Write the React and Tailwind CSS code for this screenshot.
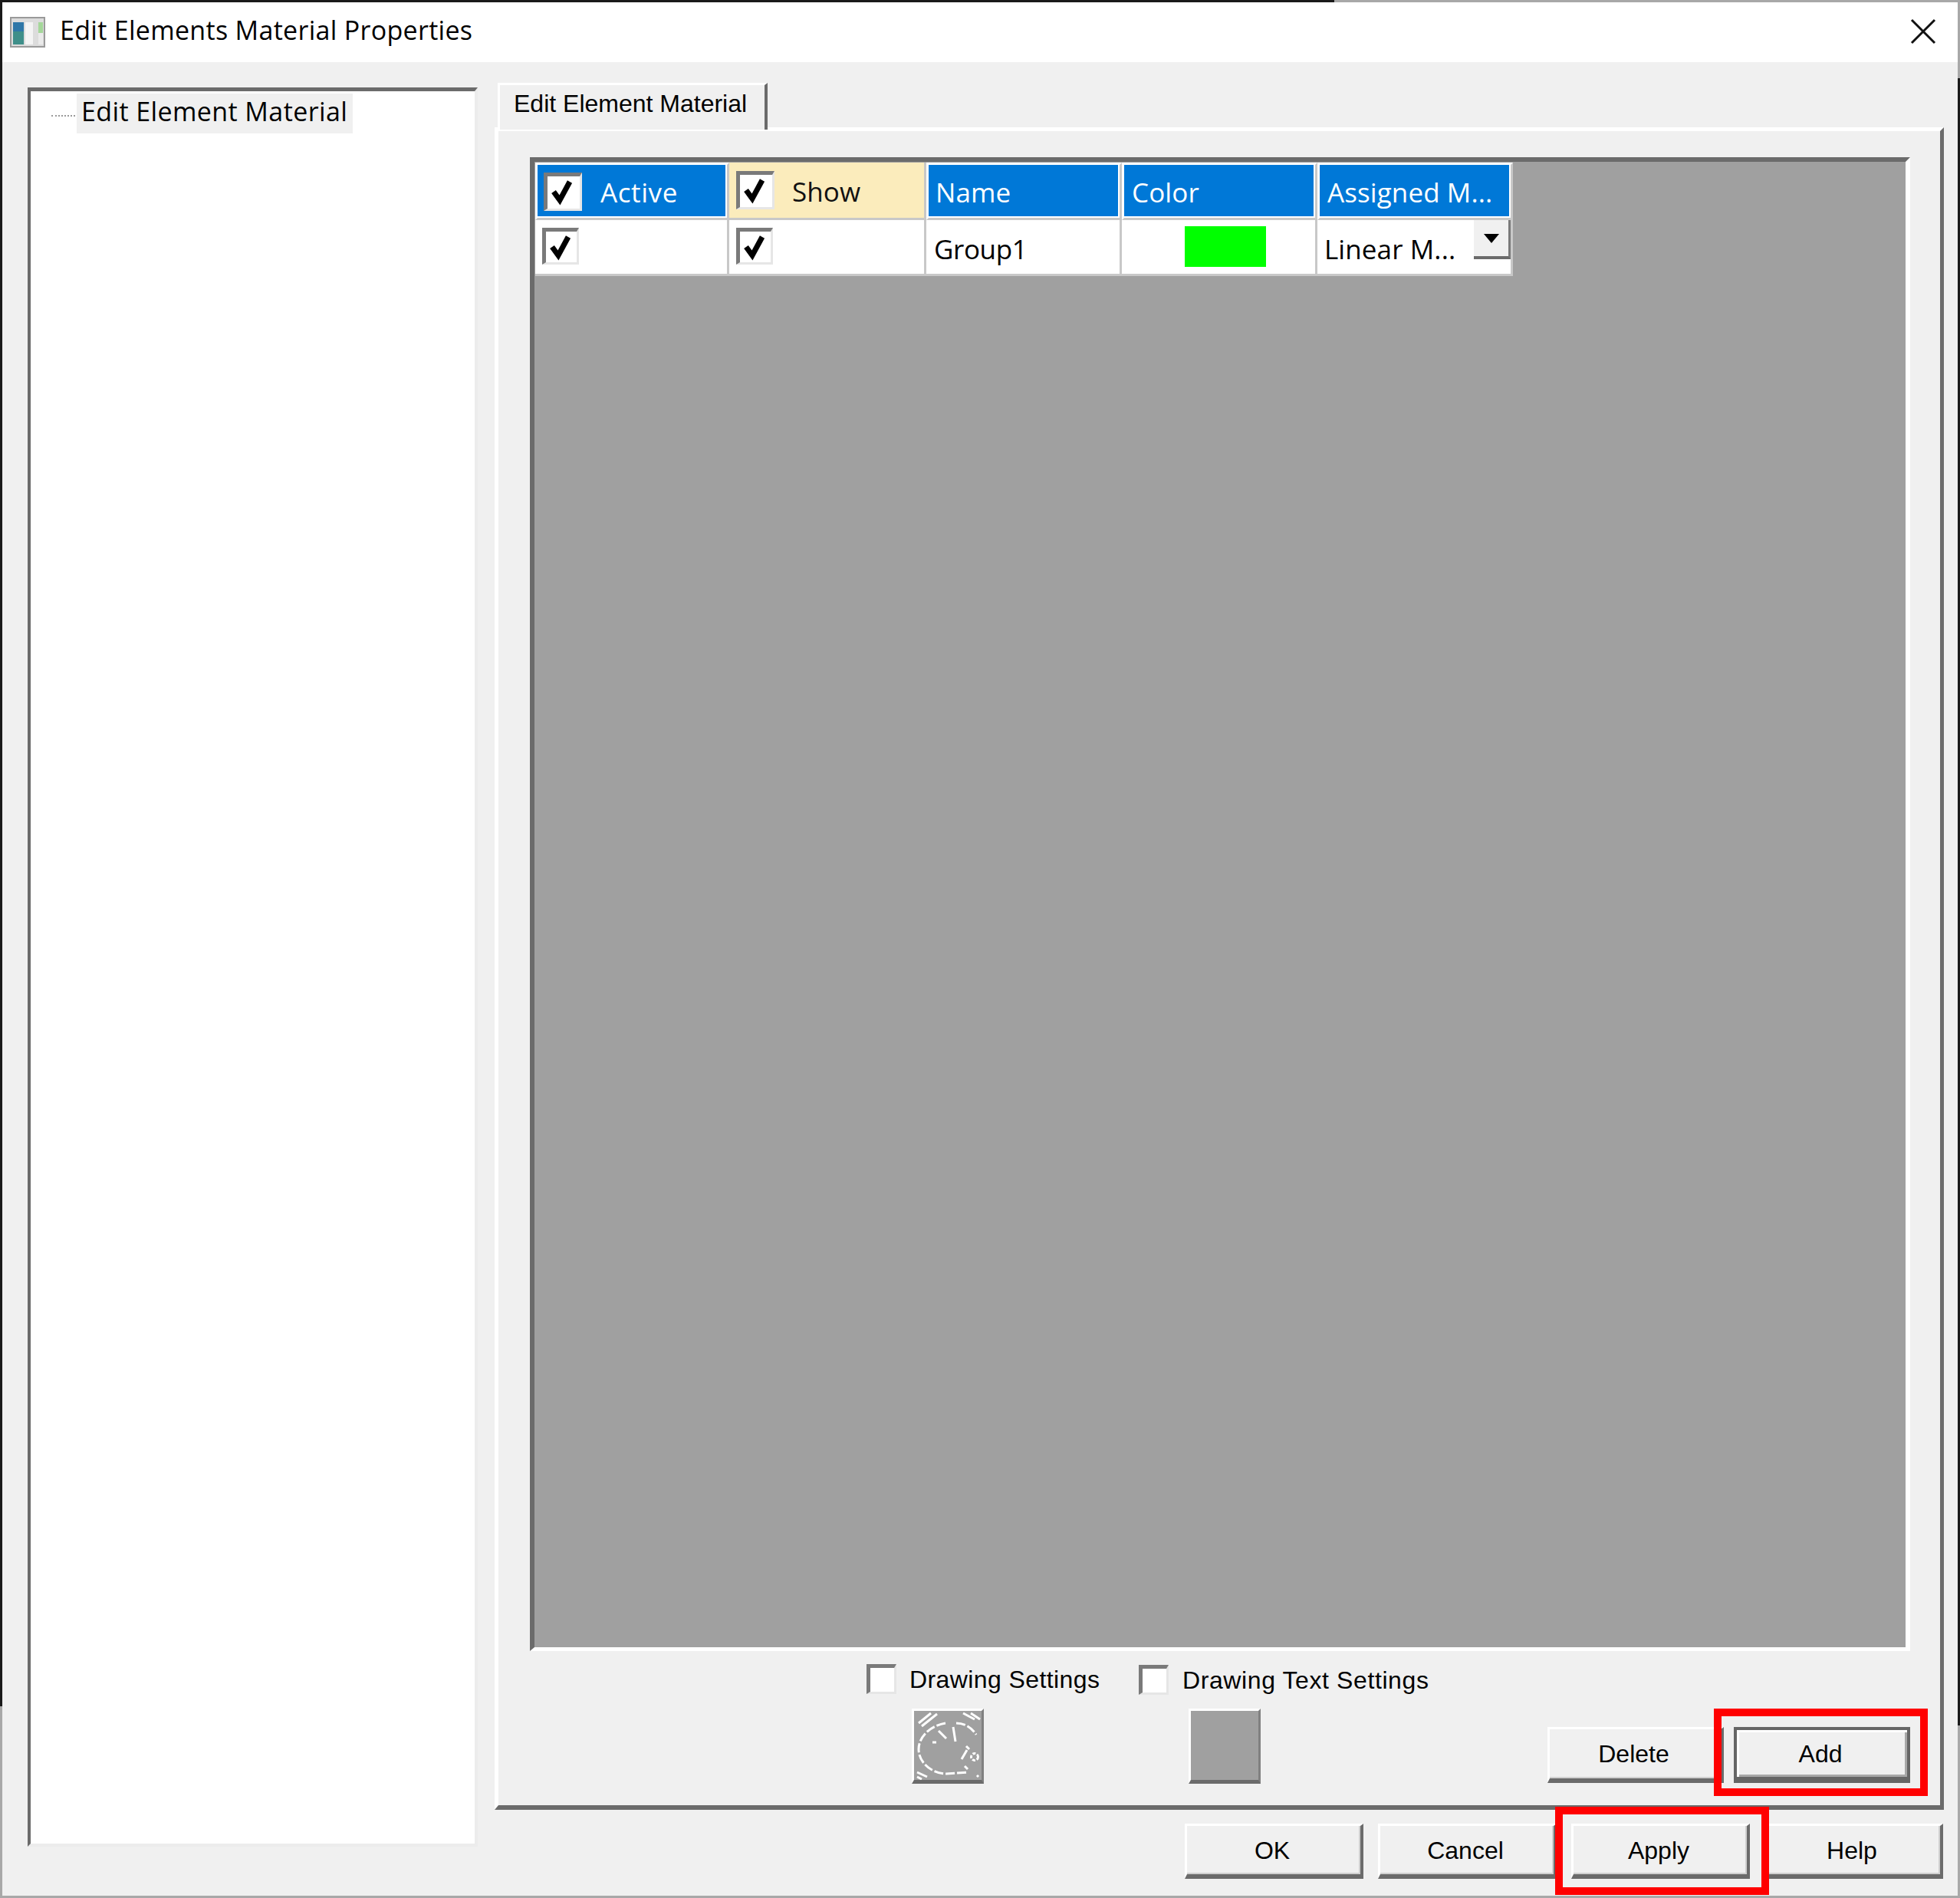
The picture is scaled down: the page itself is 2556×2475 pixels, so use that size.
const segoe = "font-['Open_Sans','Noto_Sans',sans-serif]";
const arial = "font-['Liberation_Sans',Arial,sans-serif]";

function Check() {
    return (
        <svg className="absolute left-0 top-0" width="44" height="44" viewBox="0 0 44 44">
            <path d="M8 20 L16 31 L29 7" fill="none" stroke="#000" strokeWidth="7" />
        </svg>
    );
}

function Checkbox({ checked, size = 'w-[48px] h-[48px]' }) {
    return (
        <div className={`relative shrink-0 bg-white border-t-[5px] border-l-[5px] border-r-[3px] border-b-[3px] border-t-[#7a7a7a] border-l-[#7a7a7a] border-r-[#e6e6e6] border-b-[#e6e6e6] ${size}`}>
            {checked && <Check />}
        </div>
    );
}

function Button({ children, isDefault, className = '', frame }) {
    const edge = isDefault
        ? 'border-[4px] border-[#666666] border-b-[8px] shadow-[inset_3px_3px_0_#ffffff,inset_-3px_-3px_0_#a8a8a8]'
        : 'border-t-[3px] border-l-[3px] border-r-[4px] border-b-[6px] border-t-white border-l-white border-r-[#6b6b6b] border-b-[#6b6b6b] shadow-[inset_-2px_-2px_0_#d0d0d0]';
    return (
        <div className={`relative flex items-center justify-center pr-[4px] bg-[#f0f0f0] text-[32px] text-black ${arial} ${edge} ${className}`}>
            {children}
            {frame}
        </div>
    );
}

function HeaderCell({ children, highlight, pad = 'pl-[23px]' }) {
    return (
        <div className={`flex items-center h-[75px] border-r-[3px] border-b-[3px] border-[#c8c8c8] ${highlight ? 'bg-[#fbecbc] text-[#111111]' : 'bg-[#0078d7] text-white border-t-[3px] border-l-[3px] border-t-white border-l-white shadow-[inset_-2px_-2px_0_#ffffff]'} ${pad}`}>
            {children}
        </div>
    );
}

function TableGrid() {
    return (
        <div className={`grid grid-cols-[253px_257px_255px_255px_255px] w-[1275px] ml-[1px] mt-[1px] text-[35px] tracking-[0.1px] ${segoe}`}>
            <HeaderCell pad="pl-[8px]">
                <Checkbox checked size="w-[50px] h-[50px]" />
                <span className="ml-[24px] mt-[4px] tracking-[0.6px]">Active</span>
            </HeaderCell>
            <HeaderCell highlight pad="pl-[9px]">
                <Checkbox checked size="w-[50px] h-[50px]" />
                <span className="ml-[23px] mt-[4px]">Show</span>
            </HeaderCell>
            <HeaderCell pad="pl-[9px]"><span className="mt-[4px]">Name</span></HeaderCell>
            <HeaderCell pad="pl-[10px]"><span className="mt-[4px]">Color</span></HeaderCell>
            <HeaderCell pad="pl-[10px]"><span className="mt-[4px] whitespace-nowrap">Assigned M...</span></HeaderCell>

            <div className="flex items-start h-[73px] pl-[9px] pt-[10px] bg-white border-r-[3px] border-b-[3px] border-[#c8c8c8]">
                <Checkbox checked />
            </div>
            <div className="flex items-start h-[73px] pl-[9px] pt-[10px] bg-white border-r-[3px] border-b-[3px] border-[#c8c8c8]">
                <Checkbox checked />
            </div>
            <div className="flex items-center h-[73px] pl-[10px] bg-white text-black tracking-[-0.4px] border-r-[3px] border-b-[3px] border-[#c8c8c8]">
                <span className="mt-[6px]">Group1</span>
            </div>
            <div className="flex items-center justify-center h-[73px] bg-white border-r-[3px] border-b-[3px] border-[#c8c8c8]">
                <div className="w-[106px] h-[53px] bg-[#00ff00] ml-[18px] -mt-[2px]"></div>
            </div>
            <div className="relative flex items-center h-[73px] pl-[9px] bg-white text-black border-b-[3px] border-r-[3px] border-[#c8c8c8]">
                <span className="mt-[6px] whitespace-nowrap">Linear M...</span>
                {/* combo arrow sits over the cell */}
                <div className="absolute right-0 top-0 w-[48px] h-[51px] flex items-center justify-center bg-[#f0f0f0] border-r-[3px] border-b-[4px] border-r-[#7a7a7a] border-b-[#6b6b6b]">
                    <svg width="20" height="12" viewBox="0 0 20 12"><path d="M0 0 H20 L10 12 Z" fill="#000" /></svg>
                </div>
            </div>
        </div>
    );
}

function DialIcon() {
    return (
        <svg width="88" height="90" viewBox="0 0 88 90" fill="none" stroke="#ffffff" strokeWidth="3">
            <path d="M41 16 C18 20 6 36 6 50 C6 68 24 82 42 82 L70 80" strokeDasharray="12 3" />
            <path d="M55 16 C67 16 76 23 81 31" strokeDasharray="12 3" />
            <path d="M32 26 L42 36 M51 21 L54 40 M24 41 H29 M69 51 L62 63 M68 46 L72 50 M66 72 L70 76" />
            <circle cx="79" cy="60" r="4.5" strokeDasharray="4 2" />
            <path d="M6 16 L22 3 M10 20 L30 4 M64 3 L79 11 M74 3 L86 11 M4 80 L17 86 M4 86 L10 89 M82 84 L84 86" />
        </svg>
    );
}

function BitmapButton({ children, className = '' }) {
    return (
        <div className={`flex items-center justify-center w-[94px] h-[98px] bg-[#a0a0a0] border-t-[3px] border-l-[3px] border-r-[3px] border-b-[5px] border-t-white border-l-white border-r-[#808080] border-b-[#6b6b6b] ${className}`}>
            {children}
        </div>
    );
}

export default function App() {
    return (
        <div className="flex flex-col w-[2556px] h-[2475px] bg-[#f0f0f0] overflow-hidden">
            {/* window frame, top */}
            <div className="flex h-[3px] shrink-0">
                <div className="w-[1740px] bg-[#1a1a1a]"></div>
                <div className="flex-1 bg-[#a8a8a8]"></div>
            </div>

            <div className="flex flex-1 min-h-0">
                <div className="w-[3px] shrink-0 bg-[linear-gradient(to_bottom,#1a1a1a_90%,#a8a8a8_90%)]"></div>

                <div className="flex flex-col flex-1 min-w-0">
                    {/* Title bar */}
                    <div className="flex items-center h-[78px] shrink-0 bg-white pl-[10px] pr-[28px]">
                        <svg width="46" height="40" viewBox="0 0 46 40" className="shrink-0">
                            <rect x="1" y="1" width="44" height="38" fill="#dcdcdc" stroke="#9a9a9a" strokeWidth="2" />
                            <rect x="4" y="7" width="14" height="29" fill="#3f8f8a" />
                            <rect x="4" y="7" width="14" height="12" fill="#2f77a8" />
                            <rect x="20" y="7" width="10" height="29" fill="#f4f4f4" />
                            <rect x="37" y="7" width="6" height="14" fill="#a5d79a" />
                            <rect x="37" y="21" width="6" height="15" fill="#eaeaea" />
                        </svg>
                        <span className={`ml-[19px] -mt-[5px] text-[34px] tracking-[0.3px] text-black ${segoe}`}>Edit Elements Material Properties</span>
                        <svg className="ml-auto -mt-[2px]" width="34" height="34" viewBox="0 0 34 34">
                            <path d="M2 2 L32 32 M32 2 L2 32" stroke="#111111" strokeWidth="3" />
                        </svg>
                    </div>

                    {/* Dialog body */}
                    <div className="flex flex-1 min-h-0 pl-[33px] pr-[15px]">
                        {/* Tree */}
                        <div className="w-[587px] h-[2294px] mt-[33px] shrink-0 bg-white border-t-[5px] border-l-[4px] border-r-[4px] border-b-[4px] border-t-[#6b6b6b] border-l-[#6b6b6b] border-r-[#ececec] border-b-[#ececec]">
                            <div className="flex items-center mt-[3px] ml-[27px]">
                                <div className="w-[31px] border-t-2 border-dotted border-[#9a9a9a] mt-[6px]"></div>
                                <div className={`flex items-center h-[52px] pl-[6px] pr-[7px] pb-[5px] ml-[2px] bg-[#f0f0f0] text-[34px] tracking-[0.4px] text-black ${segoe}`}>Edit Element Material</div>
                            </div>
                        </div>

                        {/* Tabs + buttons */}
                        <div className="flex flex-col w-[1890px] ml-[22px] mt-[27px]">
                            <div className={`relative z-10 flex items-center w-[352px] h-[61px] ml-[4px] -mb-[3px] pl-[18px] pb-[11px] bg-[#f0f0f0] border-t-[3px] border-l-[3px] border-r-[4px] border-t-white border-l-white border-r-[#6b6b6b] text-[32px] text-black ${arial}`}>
                                Edit Element Material
                            </div>

                            <div className="flex flex-col h-[2194px] pl-[41px] pr-[39px] pt-[34px] border-t-[5px] border-l-[5px] border-r-[5px] border-b-[6px] border-t-white border-l-white border-r-[#6b6b6b] border-b-[#6b6b6b]">
                                <div className="h-[1948px] shrink-0 bg-[#a0a0a0] border-t-[6px] border-l-[6px] border-r-[6px] border-b-[5px] border-t-[#6b6b6b] border-l-[#6b6b6b] border-r-white border-b-white">
                                    <TableGrid />
                                </div>

                                <div className="flex items-end mt-[17px]">
                                    <div className={`flex shrink-0 ml-[439px] text-[32px] tracking-[0.4px] text-black ${arial}`}>
                                        <div className="flex flex-col w-[355px]">
                                            <div className="flex items-center h-[39px]">
                                                <Checkbox size="w-[39px] h-[39px]" />
                                                <span className="ml-[17px] whitespace-nowrap">Drawing Settings</span>
                                            </div>
                                            <BitmapButton className="ml-[59px] mt-[19px]"><DialIcon /></BitmapButton>
                                        </div>
                                        <div className="flex flex-col">
                                            <div className="flex items-center h-[39px] mt-[1px]">
                                                <Checkbox size="w-[39px] h-[39px]" />
                                                <span className="ml-[18px] whitespace-nowrap tracking-[0.6px]">Drawing Text Settings</span>
                                            </div>
                                            <BitmapButton className="ml-[65px] mt-[18px]"></BitmapButton>
                                        </div>
                                    </div>
                                    <div className="flex gap-[13px] ml-auto mb-[1px]">
                                        <Button className="w-[230px] h-[73px]">Delete</Button>
                                        <Button
                                            isDefault
                                            className="w-[230px] h-[73px]"
                                            frame={<div className="absolute -left-[30px] -top-[28px] w-[279px] h-[114px] border-[10px] border-[#ff0000]"></div>}
                                        >
                                            Add
                                        </Button>
                                    </div>
                                </div>
                            </div>

                            <div className="flex justify-end gap-[19px] mt-[18px] pr-[1px]">
                                <Button className="w-[233px] h-[72px]">OK</Button>
                                <Button className="w-[233px] h-[72px]">Cancel</Button>
                                <Button
                                    className="z-10 w-[233px] h-[72px]"
                                    frame={<div className="absolute -left-[24px] -top-[25px] w-[279px] h-[115px] border-[10px] border-[#ff0000]"></div>}
                                >
                                    Apply
                                </Button>
                                <Button className="w-[233px] h-[72px]">Help</Button>
                            </div>
                        </div>
                    </div>
                </div>

                <div className="w-[3px] shrink-0 bg-[linear-gradient(to_bottom,#a8a8a8_4%,#1a1a1a_4%,#1a1a1a_91%,#a8a8a8_91%)]"></div>
            </div>

            <div className="h-[3px] shrink-0 bg-[#a8a8a8]"></div>
        </div>
    );
}
